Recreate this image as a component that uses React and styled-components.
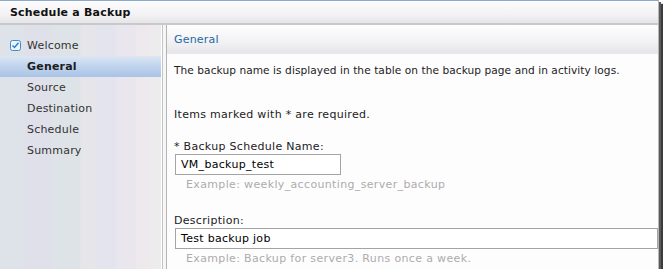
import React from 'react';
import styled, { createGlobalStyle } from 'styled-components';

const GlobalStyle = createGlobalStyle`
  body {
    margin: 0;
    background: #ffffff;
    font-family: "DejaVu Sans", Verdana, sans-serif;
  }
`;

const Window = styled.div`
  width: 658px;
  height: 268px;
  border-top: 1px solid #8fa9cb;
  border-right: 1px solid #b8b8b8;
  box-shadow: 2px 2px 0 #5a5a5a, 4px 4px 1px #3c3c3c;
  display: flex;
  flex-direction: column;
  overflow: hidden;
  background: #ffffff;
`;

const TitleBar = styled.div`
  height: 22px;
  flex: none;
  display: flex;
  align-items: center;
  padding-left: 10px;
  background: linear-gradient(#fdfcfd, #f3f2f4 60%, #e6e5e8);
  border-bottom: 2px solid #c9c9cb;
  font-size: 11px;
  font-weight: bold;
  color: #111;
  letter-spacing: 0.2px;
`;

const Body = styled.div`
  flex: 1;
  display: flex;
  min-height: 0;
`;

const Sidebar = styled.ul`
  width: 161px;
  flex: none;
  margin: 0;
  padding: 10px 0 0;
  list-style: none;
  background: linear-gradient(
    90deg,
    #dde3e8 0px,
    #dde3e8 24px,
    #dfe0ea 25px,
    #dfe0ea 50px,
    #dde3e6 51px,
    #dde3e6 80px,
    #e6e6ea 81px,
    #e6e6ea 95px,
    #e4e4ee 96px,
    #e4e4ee 116px,
    #e9e6ee 117px,
    #e9e6ee 135px,
    #ede8ec 136px,
    #ede9ec 150px,
    #ececec 151px
  );
`;

const NavItem = styled.li`
  height: 21px;
  display: flex;
  align-items: center;
  padding-left: 27px;
  font-size: 11px;
  letter-spacing: 0.2px;
  color: ${(p) => (p.$active ? '#1c1c1c' : '#333')};
  font-weight: ${(p) => (p.$active ? 'bold' : 'normal')};
  background: ${(p) =>
    p.$active ? 'linear-gradient(#dce7f5, #c2d5ee 45%, #a9c3e6)' : 'transparent'};
  position: relative;
`;

const Check = styled.svg`
  position: absolute;
  left: 10px;
  top: 5px;
`;

const Divider = styled.div`
  width: 4px;
  flex: none;
  background: #f6f6f6;
  border-left: 1px solid #ffffff;
  border-right: 1px solid #b4b4b4;
  box-shadow: inset 1px 0 0 #c4c4c4;
`;

const Content = styled.div`
  flex: 1;
  min-width: 0;
  background: #fefdfe;
  font-size: 11px;
  letter-spacing: 0.3px;
  color: #222;
`;

const Header = styled.div`
  height: 19px;
  padding: 8px 0 0 7px;
  background: linear-gradient(#ffffff, #f4f3f5 55%, #e7e6e9);
  border-bottom: 2px solid #e9e7ea;
  color: #1d69a6;
  font-size: 11px;
  letter-spacing: 0.2px;
  line-height: 14px;
`;

const Text = styled.div`
  padding-left: 7px;
  line-height: 14px;
  margin-top: ${(p) => p.$top || 0}px;
  font-size: ${(p) => (p.$compact ? '10.6px' : '11px')};
  letter-spacing: ${(p) => (p.$compact ? '0.06px' : '0.3px')};
  white-space: nowrap;
`;

const Input = styled.div`
  margin-left: 8px;
  width: ${(p) => p.$width || 'auto'};
  height: 21px;
  border: 1px solid #a4a4a4;
  background: #fff;
  display: flex;
  align-items: center;
  padding-left: 5px;
  color: #000;
  font-size: 11px;
  letter-spacing: 0.3px;
  box-sizing: border-box;
`;

const Hint = styled.div`
  padding-left: 19px;
  margin-top: 3px;
  line-height: 14px;
  color: #acacac;
  letter-spacing: 0.35px;
  white-space: nowrap;
`;

const steps = ['General', 'Source', 'Destination', 'Schedule', 'Summary'];

export default function App() {
  return (
    <>
      <GlobalStyle />
      <Window>
        <TitleBar>Schedule a Backup</TitleBar>
        <Body>
          <Sidebar>
            <NavItem>
              <Check width="11" height="11" viewBox="0 0 11 11">
                <rect x="0.5" y="0.5" width="10" height="10" rx="2" fill="#eef5fd" stroke="#3d8ad6" />
                <path d="M2.5 5.5 L4.5 7.5 L8.5 2.8" fill="none" stroke="#2f7dc8" strokeWidth="1.4" />
              </Check>
              Welcome
            </NavItem>
            {steps.map((s) => (
              <NavItem key={s} $active={s === 'General'}>
                {s}
              </NavItem>
            ))}
          </Sidebar>
          <Divider />
          <Content>
            <Header>General</Header>
            <Text $top={9} $compact>
              The backup name is displayed in the table on the backup page and in activity logs.
            </Text>
            <Text $top={31}>Items marked with * are required.</Text>
            <Text $top={18}>* Backup Schedule Name:</Text>
            <Input $width="166px">VM_backup_test</Input>
            <Hint>Example: weekly_accounting_server_backup</Hint>
            <Text $top={22}>Description:</Text>
            <Input>Test backup job</Input>
            <Hint>Example: Backup for server3. Runs once a week.</Hint>
          </Content>
        </Body>
      </Window>
    </>
  );
}
